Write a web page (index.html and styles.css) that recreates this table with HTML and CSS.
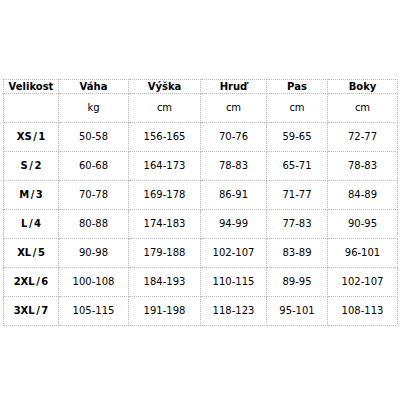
FILE: index.html
```html
<!DOCTYPE html>
<html lang="cs">
<head>
<meta charset="utf-8">
<link rel="stylesheet" href="styles.css">
</head>
<body>
<table class="sizes">
  <colgroup>
    <col class="c1"><col class="c2"><col class="c3"><col class="c4"><col class="c5"><col class="c6">
  </colgroup>
  <tr class="head"><th>Velikost</th><th>Váha</th><th>Výška</th><th>Hruď</th><th>Pas</th><th>Boky</th></tr>
  <tr class="row"><td></td><td>kg</td><td>cm</td><td>cm</td><td>cm</td><td>cm</td></tr>
  <tr class="row"><th>XS<span class="sl">/</span>1</th><td>50-58</td><td>156-165</td><td>70-76</td><td>59-65</td><td>72-77</td></tr>
  <tr class="row"><th>S<span class="sl">/</span>2</th><td>60-68</td><td>164-173</td><td>78-83</td><td>65-71</td><td>78-83</td></tr>
  <tr class="row"><th>M<span class="sl">/</span>3</th><td>70-78</td><td>169-178</td><td>86-91</td><td>71-77</td><td>84-89</td></tr>
  <tr class="row"><th>L<span class="sl">/</span>4</th><td>80-88</td><td>174-183</td><td>94-99</td><td>77-83</td><td>90-95</td></tr>
  <tr class="row"><th>XL<span class="sl">/</span>5</th><td>90-98</td><td>179-188</td><td>102-107</td><td>83-89</td><td>96-101</td></tr>
  <tr class="row"><th>2XL<span class="sl">/</span>6</th><td>100-108</td><td>184-193</td><td>110-115</td><td>89-95</td><td>102-107</td></tr>
  <tr class="row"><th>3XL<span class="sl">/</span>7</th><td>105-115</td><td>191-198</td><td>118-123</td><td>95-101</td><td>108-113</td></tr>
</table>
</body>
</html>
```

FILE: styles.css
```css
html, body {
  margin: 0;
  background: #fff;
}
body {
  padding: 79px 0 0 3px;
  font-family: "DejaVu Sans", Verdana, sans-serif;
  font-size: 10px;
  color: #000;
}
.sizes {
  border-collapse: collapse;
  table-layout: fixed;
  width: 395px;
}
.c1 { width: 55px; }
.c2 { width: 70px; }
.c3 { width: 72px; }
.c4 { width: 66px; }
.c5 { width: 61px; }
.c6 { width: 70px; }
.sizes th, .sizes td {
  border: 1px dotted #bcbcbc;
  padding: 0;
  text-align: center;
  vertical-align: middle;
  line-height: 12px;
}
.sizes th { font-weight: bold; }
.sl { margin: 0 1.5px; }
.head th { height: 13px; }
.row th, .row td { height: 28px; }
```
